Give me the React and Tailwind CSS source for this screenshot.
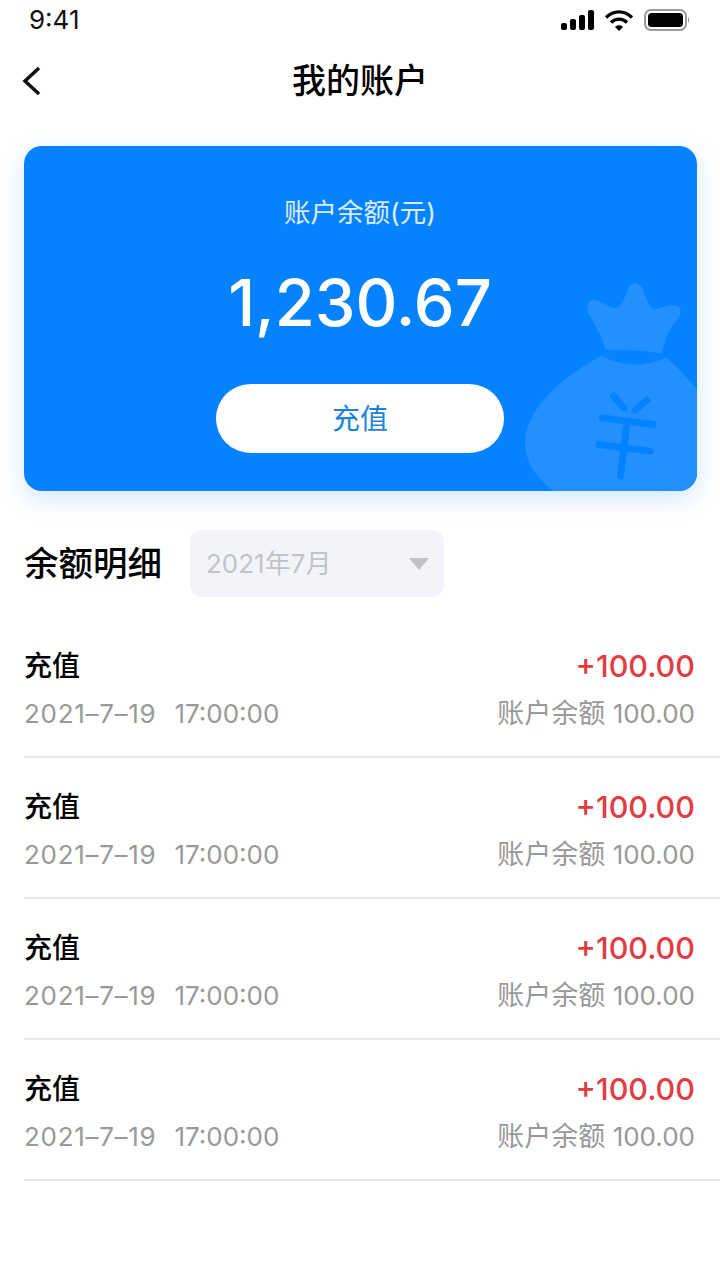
const font = { fontFamily: '"Inter", "Noto Sans CJK SC", sans-serif' };

const records = [1, 2, 3, 4];

function StatusBar() {
    return (
        <div className="h-[40px] flex items-center justify-between pl-[29px] pr-[30px]">
            <span className="text-[26px] leading-[40px] text-[#111]">9:41</span>
            <div className="flex items-center gap-[10px]">
                <svg width="33" height="20" viewBox="0 0 33 20" fill="#000">
                    <rect x="0" y="13" width="6" height="7" rx="2" />
                    <rect x="9" y="9" width="6" height="11" rx="2" />
                    <rect x="18" y="5" width="6" height="15" rx="2" />
                    <rect x="27" y="0" width="6" height="20" rx="2" />
                </svg>
                <svg width="30" height="22" viewBox="0 0 30 22" fill="none" stroke="#000" strokeWidth="3.2">
                    <path d="M2 8.5C9.5 1 20.5 1 28 8.5" />
                    <path d="M7 13.5C11.5 9 18.5 9 23 13.5" />
                    <path d="M11 18L15 22L19 18C17 15.800 13 15.800 11 18Z" fill="#000" stroke="none" />
                </svg>
                <svg width="46" height="22" viewBox="0 0 46 22" fill="none">
                    <rect x="1" y="1" width="41" height="20" rx="6" stroke="#999" strokeWidth="2" />
                    <rect x="4" y="4" width="35" height="14" rx="3.500" fill="#000" />
                    <path d="M44 8C45.500 8.500 45.500 13.500 44 14Z" fill="#999" />
                </svg>
            </div>
        </div>
    );
}

function MoneyBag() {
    return (
        <svg className="absolute right-0 bottom-0" width="177" height="217" viewBox="60 40 530 650">
            <path
                d="M405 68C420 68 428 85 436 108C443 128 452 146 470 145C490 138 508 130 528 135C546 142 544 158 534 172C515 195 495 225 485 278C430 268 370 266 315 268C305 225 285 195 266 160C255 140 262 118 285 118C305 122 325 140 345 142C362 140 370 120 378 98C385 80 392 68 405 68Z"
                fill="#2390ff"
            />
            <path
                d="M305 285C360 318 440 320 495 290C530 315 565 355 590 385L590 690L160 690C105 650 75 600 75 545C75 445 190 345 305 285Z"
                fill="#2390ff"
            />
            <g stroke="#0582ff" strokeWidth="21" strokeLinecap="round">
                <path d="M340 406L372 442" />
                <path d="M440 418L404 449" />
                <path d="M306 471L458 491" />
                <path d="M296 551L450 571" />
                <path d="M378 500L361 645" />
            </g>
        </svg>
    );
}

function RecordRow() {
    return (
        <div className="h-[141px] ml-[24px] pr-[25px] border-b-2 border-[#e8e8e8] pt-[27px]">
            <div className="flex items-center justify-between h-[44px]">
                <span className="text-[28px] leading-[44px] font-medium text-[#000]">充值</span>
                <span className="text-[30.500px] leading-[44px] font-medium text-[#e23c44]">+100.00</span>
            </div>
            <div className="flex items-center justify-between h-[48px] mt-[2px] text-[26px] text-[#999]">
                <span className="leading-[48px]">
                    <span className="tracking-[0.7px]">2021–7–19</span>
                    <span className="ml-[18px]">17:00:00</span>
                </span>
                <span className="leading-[48px]">
                    <span className="text-[27px]">账户余额</span> 100.00
                </span>
            </div>
        </div>
    );
}

export default function App() {
    return (
        <div className="w-[720px] h-[1280px] bg-white overflow-hidden" style={font}>
            <StatusBar />
            <div className="relative h-[82px] flex items-center justify-center">
                <svg className="absolute left-[20px] top-[26px]" width="24" height="30" viewBox="0 0 24 30" fill="none" stroke="#111" strokeWidth="3.500">
                    <path d="M19 2L5 15L19 28" />
                </svg>
                <h1 className="text-[34px] leading-[44px] font-medium text-[#000]">我的账户</h1>
            </div>
            <div className="ml-[23.500px] w-[673px] mt-[24px] h-[345px] relative overflow-hidden rounded-[18px] bg-[#0582ff] shadow-[0_8px_24px_rgba(5,130,255,0.18)] flex flex-col items-center">
                <MoneyBag />
                <p className="relative mt-[46px] text-[26.500px] leading-[40px] text-white/85">账户余额(元)</p>
                <p className="relative mt-[31px] text-[65px] leading-[80px] font-medium text-white">1,230.67</p>
                <button className="relative mt-[41px] w-[288px] h-[69px] rounded-full bg-white text-[28px] text-[#1a82d8]">充值</button>
            </div>
            <div className="flex items-center mt-[39px] pl-[24px] h-[67px]">
                <h2 className="text-[34.500px] font-medium text-[#000] w-[166px]">余额明细</h2>
                <div className="w-[254px] h-[67px] rounded-[12px] bg-[#f3f4f9] flex items-center justify-between pl-[16px] pr-[15px]">
                    <span className="text-[26px] text-[#c2c3c8]">2021年7月</span>
                    <svg width="20" height="12" viewBox="0 0 20 12" fill="#c2c3c8">
                        <path d="M0 0H20L10 12Z" />
                    </svg>
                </div>
            </div>
            <div className="mt-[20px]">
                {records.map(id => (
                    <RecordRow key={id} />
                ))}
            </div>
        </div>
    );
}
